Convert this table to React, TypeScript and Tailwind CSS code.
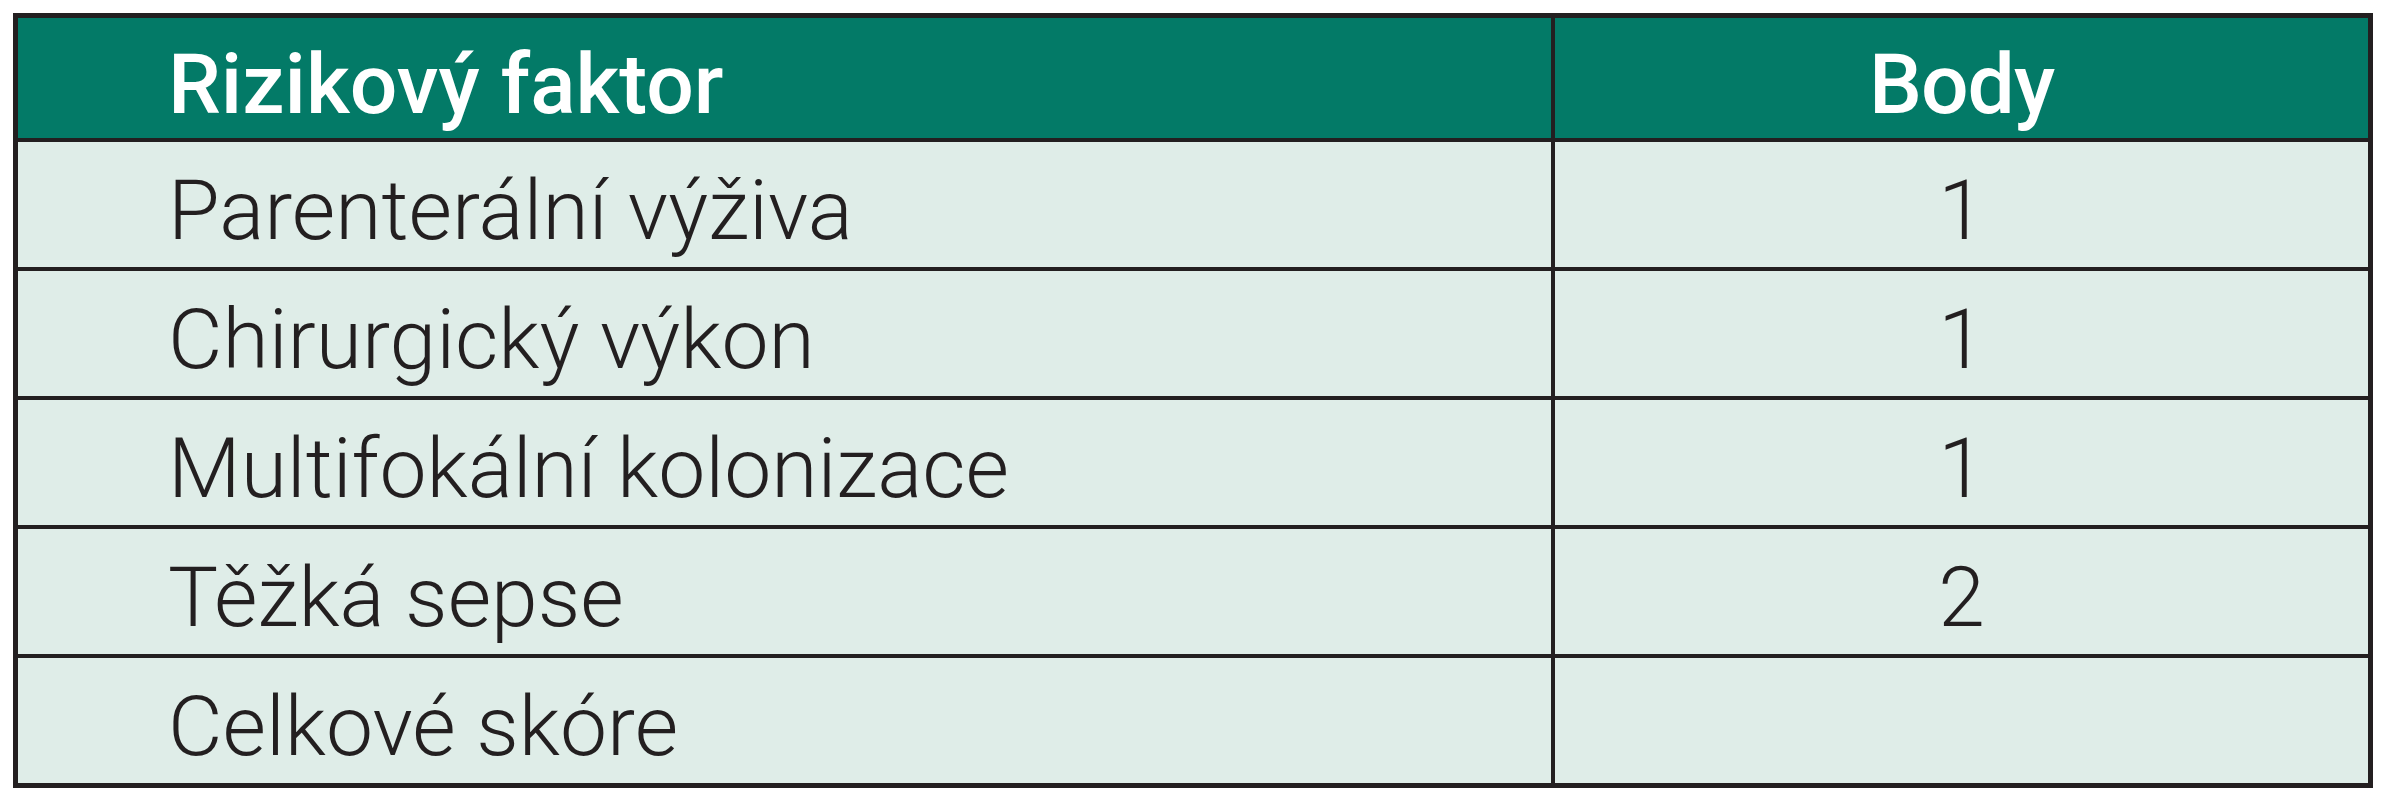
import React from "react";

const rows: { label: string; points: string }[] = [
  { label: "Parenterální výživa", points: "1" },
  { label: "Chirurgický výkon", points: "1" },
  { label: "Multifokální kolonizace", points: "1" },
  { label: "Těžká sepse", points: "2" },
  { label: "Celkové skóre", points: "" },
];

export default function App() {
  return (
    <div
      className="w-[2387px] h-[800px] bg-white pt-[13px] pl-[13px]"
      style={{ fontFamily: 'Roboto, "Liberation Sans", Arial, sans-serif' }}
    >
      <div className="w-[2360px] border-[5px] border-[#231f20] bg-[#231f20] flex flex-col gap-[4px]">
        <div className="flex h-[120px] gap-[4px]">
          <div className="w-[1533px] bg-[#037a67] flex items-center pl-[150px] pt-[14px] text-white font-medium text-[84px] leading-none">
            Rizikový faktor
          </div>
          <div className="flex-1 bg-[#037a67] flex items-center justify-center pt-[14px] text-white font-medium text-[84px] leading-none tracking-[-1px]">
            Body
          </div>
        </div>
        {rows.map((r) => (
          <div key={r.label} className="flex h-[125px] gap-[4px]">
            <div className="w-[1533px] bg-[#dfede8] flex items-center pl-[150px] pt-[12px] text-[#231f20] font-light text-[84px] leading-none">
              {r.label}
            </div>
            <div className="flex-1 bg-[#dfede8] flex items-center justify-center pt-[12px] text-[#231f20] font-light text-[84px] leading-none">
              {r.points}
            </div>
          </div>
        ))}
      </div>
    </div>
  );
}
